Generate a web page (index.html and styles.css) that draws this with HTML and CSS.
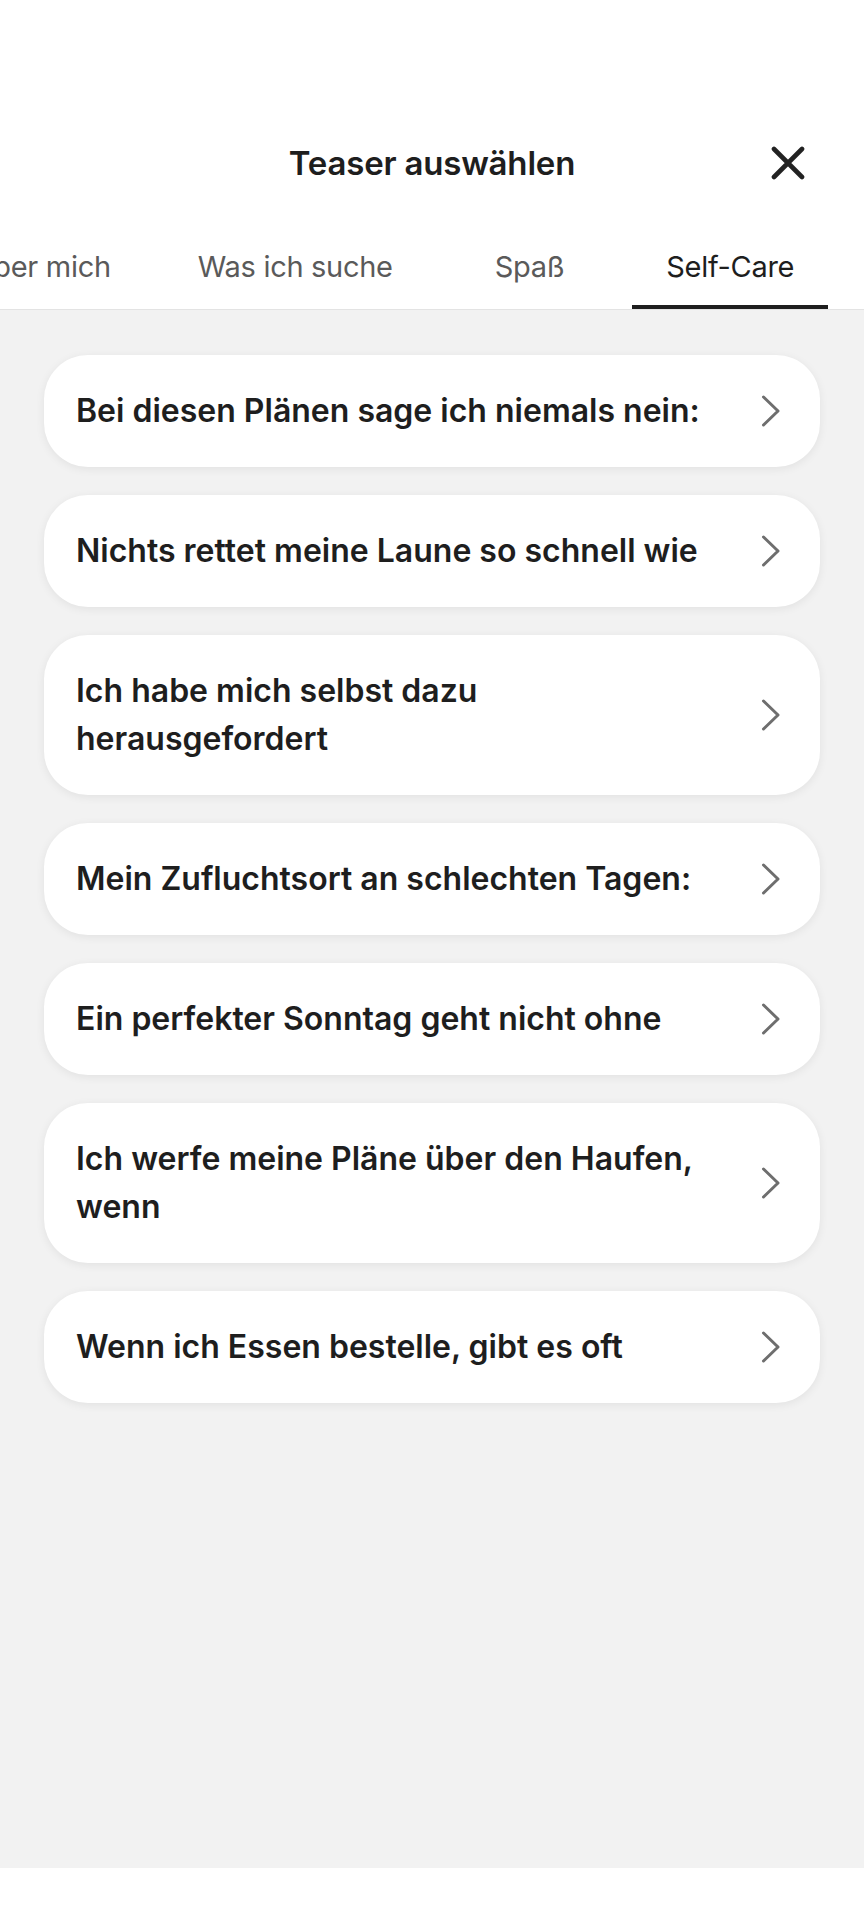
FILE: index.html
```html
<!DOCTYPE html>
<html lang="de">
<head>
<meta charset="utf-8">
<title>Teaser auswählen</title>
<link rel="stylesheet" href="styles.css">
</head>
<body>
<div class="screen">
  <header class="topbar">
    <div class="topbar-side"></div>
    <h1 class="title">Teaser auswählen</h1>
    <div class="topbar-side topbar-end">
      <button class="close" aria-label="Schließen">
        <svg width="34" height="34" viewBox="0 0 34 34"><path d="M3 3 L31 31 M31 3 L3 31" stroke="#222" stroke-width="4.6" stroke-linecap="round" fill="none"/></svg>
      </button>
    </div>
  </header>
  <nav class="tabs">
    <div class="tab-strip">
      <div class="tab tab-first">Über mich</div>
      <div class="tab">Was ich suche</div>
      <div class="tab">Spaß</div>
      <div class="tab active">Self-Care</div>
    </div>
  </nav>
  <main class="content">
    <div class="card"><span class="card-text">Bei diesen Plänen sage ich niemals nein:</span><svg class="chev" width="20" height="32" viewBox="0 0 20 32"><path d="M2.5 2 L17 16 L2.5 30" stroke="#6e6e6e" stroke-width="3" stroke-linecap="round" stroke-linejoin="round" fill="none"/></svg></div>
    <div class="card"><span class="card-text">Nichts rettet meine Laune so schnell wie</span><svg class="chev" width="20" height="32" viewBox="0 0 20 32"><path d="M2.5 2 L17 16 L2.5 30" stroke="#6e6e6e" stroke-width="3" stroke-linecap="round" stroke-linejoin="round" fill="none"/></svg></div>
    <div class="card"><span class="card-text">Ich habe mich selbst dazu herausgefordert</span><svg class="chev" width="20" height="32" viewBox="0 0 20 32"><path d="M2.5 2 L17 16 L2.5 30" stroke="#6e6e6e" stroke-width="3" stroke-linecap="round" stroke-linejoin="round" fill="none"/></svg></div>
    <div class="card"><span class="card-text">Mein Zufluchtsort an schlechten Tagen:</span><svg class="chev" width="20" height="32" viewBox="0 0 20 32"><path d="M2.5 2 L17 16 L2.5 30" stroke="#6e6e6e" stroke-width="3" stroke-linecap="round" stroke-linejoin="round" fill="none"/></svg></div>
    <div class="card"><span class="card-text">Ein perfekter Sonntag geht nicht ohne</span><svg class="chev" width="20" height="32" viewBox="0 0 20 32"><path d="M2.5 2 L17 16 L2.5 30" stroke="#6e6e6e" stroke-width="3" stroke-linecap="round" stroke-linejoin="round" fill="none"/></svg></div>
    <div class="card"><span class="card-text">Ich werfe meine Pläne über den Haufen, wenn</span><svg class="chev" width="20" height="32" viewBox="0 0 20 32"><path d="M2.5 2 L17 16 L2.5 30" stroke="#6e6e6e" stroke-width="3" stroke-linecap="round" stroke-linejoin="round" fill="none"/></svg></div>
    <div class="card"><span class="card-text">Wenn ich Essen bestelle, gibt es oft</span><svg class="chev" width="20" height="32" viewBox="0 0 20 32"><path d="M2.5 2 L17 16 L2.5 30" stroke="#6e6e6e" stroke-width="3" stroke-linecap="round" stroke-linejoin="round" fill="none"/></svg></div>
  </main>
  <div class="bottom"></div>
</div>
</body>
</html>
```
FILE: styles.css
```css
* { box-sizing: border-box; }
html, body { margin: 0; padding: 0; background: #ffffff; }
body { font-family: Inter, "Noto Sans", Roboto, sans-serif; color: #1f1f1f; }
.screen { width: 864px; height: 1920px; display: flex; flex-direction: column; overflow: hidden; }

.topbar {
  display: grid;
  grid-template-columns: 1fr auto 1fr;
  align-items: center;
  padding-top: 143px;
}
.title {
  margin: 0;
  font-size: 33px;
  line-height: 40px;
  font-weight: 600;
  color: #1e1e1e;
  letter-spacing: -0.2px;
}
.topbar-end { display: flex; justify-content: flex-end; padding-right: 59px; }
.close {
  background: none; border: 0; padding: 0; margin: 0;
  width: 34px; height: 34px; display: flex; align-items: center; justify-content: center;
}

.tabs {
  border-bottom: 1px solid #e3e3e3;
  overflow: hidden;
}
.tab-strip {
  display: flex;
  gap: 34px;
  margin-left: -62px;
}
.tab {
  flex: none;
  padding: 66px 34px 20px;
  font-size: 29px;
  line-height: 36px;
  font-weight: 400;
  color: #5a5a5a;
  border-bottom: 4px solid transparent;
  white-space: nowrap;
  letter-spacing: -0.3px;
}
.tab-first { padding-right: 19px; }
.tab.active { color: #1e1e1e; border-bottom-color: #1e1e1e; }

.content {
  flex: 1;
  background: #f2f2f2;
  padding: 45px 44px 0;
  display: flex;
  flex-direction: column;
  gap: 28px;
}
.card {
  background: #ffffff;
  border-radius: 44px;
  padding: 32px 39px 32px 32px;
  display: flex;
  align-items: center;
  box-shadow: 0 2px 10px rgba(0, 0, 0, 0.07);
}
.card-text {
  flex: 1;
  font-size: 32px;
  line-height: 48px;
  font-weight: 600;
  color: #1e1e1e;
  margin-right: 40px;
  letter-spacing: 0;
}
.chev { flex: none; display: block; }
.bottom { height: 52px; background: #ffffff; }
```
